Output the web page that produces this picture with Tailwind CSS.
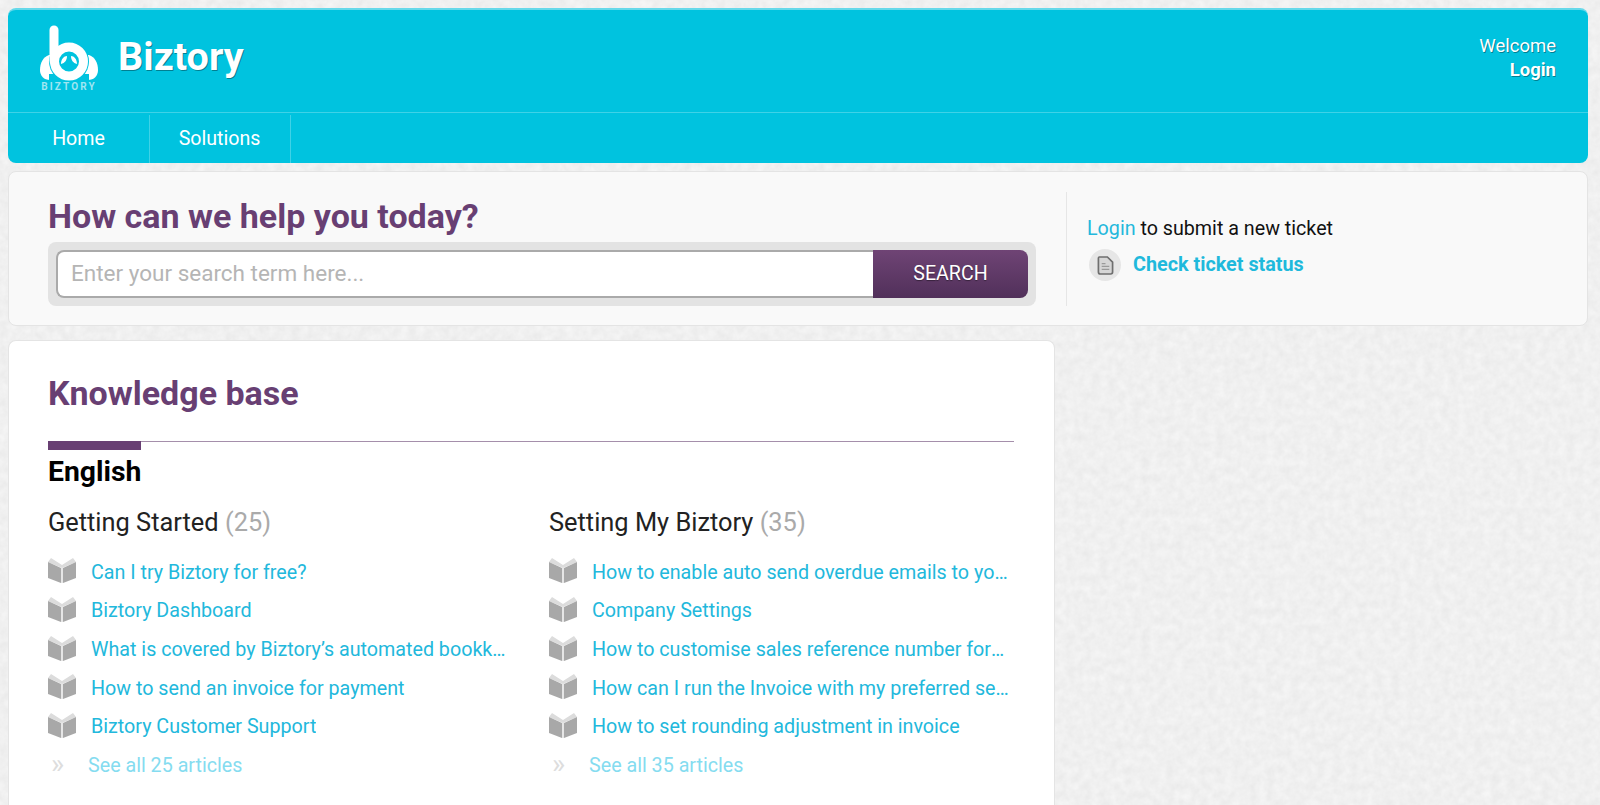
<!DOCTYPE html>
<html lang="en">
<head>
  <meta charset="UTF-8" />
  <meta name="viewport" content="width=device-width, initial-scale=1.0" />
  <title>Biztory Support</title>
  <script src="https://cdn.jsdelivr.net/npm/@tailwindcss/browser@4"></script>
</head>
<body class="bg-[#eeeeee] font-['Roboto',sans-serif] h-[805px] overflow-hidden pl-2 pr-[12px] pt-2 relative">
  <!-- paper texture behind the page -->
  <svg class="absolute inset-0 w-full h-full">
    <filter id="paper" color-interpolation-filters="sRGB">
      <feTurbulence type="fractalNoise" baseFrequency="0.12" numOctaves="3" seed="4" />
      <feColorMatrix type="matrix" values="0.06 0 0 0 0.91  0.06 0 0 0 0.91  0.06 0 0 0 0.91  0 0 0 0 1" />
    </filter>
    <rect width="100%" height="100%" filter="url(#paper)" />
  </svg>

  <svg class="hidden">
    <symbol id="book" viewBox="0 0 28 27">
      <path d="M3 1 L14 8 L25 1 L28 5 L14 11 L0 5 Z" fill="#dcdcdc" />
      <path d="M0 5 L13 11 V26 L0 21 Z" fill="#a8a8a8" />
      <path d="M28 5 L15 11 V26 L28 21 Z" fill="#a8a8a8" />
      <path d="M13 11 H15 V26 H13 Z" fill="#e6e6e6" />
    </symbol>
  </svg>

  <div class="relative">
    <!-- Header -->
    <header class="h-[155px] bg-[#00c3df] rounded-lg border-t-2 border-[#66d9ea] text-white">
      <div class="h-[103px] flex justify-between pl-8 pr-8 border-b border-[#3fd2e7]">
        <div class="flex items-center">
          <div class="w-[58px] flex flex-col items-center mt-[-6px]">
            <svg viewBox="0 0 58 56" class="w-[58px] h-[56px]">
              <path d="M9 30 C3 32 0 38 0 45 C0 51 4 55 10 55 H48 C54 55 58 51 58 45 C58 38 55 32 49 30 Z" fill="#fff" />
              <circle cx="29" cy="36.500" r="20" fill="#00c3df" />
              <rect x="9" y="49" width="40" height="7" fill="#00c3df" />
              <circle cx="29" cy="36.500" r="14.500" fill="none" stroke="#fff" stroke-width="9" />
              <path d="M14 5 V36" stroke="#fff" stroke-width="9" stroke-linecap="round" fill="none" />
              <path d="M21 39 C21 34 24 31 27 31 C27 35 25 38 21 39 Z M37 39 C37 34 34 31 31 31 C31 35 33 38 37 39 Z" fill="#fff" />
            </svg>
            <span class="text-[10px] leading-[10px] font-bold tracking-[2.100px] text-[#9fe6f2] mt-[1px] whitespace-nowrap">BIZTORY</span>
          </div>
          <span class="ml-[20px] text-[39.500px] leading-none font-bold mb-[8px] [text-shadow:1px_1px_0_rgba(0,0,0,0.35)]">Biztory</span>
        </div>
        <div class="text-right text-[18.500px] leading-[24px] pt-[24px] [text-shadow:1px_1px_0_rgba(0,0,0,0.35)]">
          <div>Welcome</div>
          <div class="font-bold">Login</div>
        </div>
      </div>
      <nav class="flex h-[50px] text-[19.600px] pt-[2px]">
        <a class="w-[142px] border-r border-[#3fd2e7] flex items-center justify-center">Home</a>
        <a class="w-[141px] border-r border-[#3fd2e7] flex items-center justify-center pr-[1px]">Solutions</a>
      </nav>
    </header>

    <!-- Search -->
    <section class="mt-2 h-[155px] bg-[#f9f9f9] border border-[#e4e4e4] rounded-lg flex items-start">
      <div class="w-[1057px] pl-[39px] pt-[24px]">
        <h1 class="text-[34px] leading-[40px] font-bold text-[#683f73]">How can we help you today?</h1>
        <div class="mt-[6px] w-[988px] h-[64px] bg-[#e3e3e3] rounded-lg p-2 flex">
          <div class="flex-1 bg-white border-2 border-[#aaaaaa] border-r-0 rounded-l-lg pl-[13px] flex items-center text-[22.500px] text-[#b5b5b5]">Enter your search term here...</div>
          <button class="w-[155px] rounded-r-lg bg-gradient-to-b from-[#6f4475] to-[#51305a] text-white text-[19.600px] [text-shadow:0_1px_1px_rgba(0,0,0,0.4)]">SEARCH</button>
        </div>
      </div>
      <div class="mt-[20px] h-[114px] border-l border-[#e6e6e6] pl-[20px] pt-[24px]">
        <p class="text-[19.700px] leading-[26px] text-[#111111]"><a class="text-[#24b8dc]">Login</a> to submit a new ticket</p>
        <div class="mt-[7px] flex items-center">
          <span class="ml-[2px] w-[32px] h-[32px] rounded-full bg-[#e6e6e6] flex items-center justify-center">
            <svg viewBox="0 0 18 20" class="w-[17px] h-[19px]">
              <path d="M2.500 1 H11 L16.500 6.500 V17 Q16.500 19 14.500 19 H3.500 Q1.500 19 1.500 17 V2.500 Q1.500 1 2.500 1 Z" fill="#d6d6d6" stroke="#6f6f6f" stroke-width="1.800" />
              <path d="M5 8 H9 M5 11 H13 M5 14 H13" stroke="#9a9a9a" stroke-width="1.300" />
            </svg>
          </span>
          <a class="ml-[12px] text-[19.800px] font-bold text-[#1fb9dc]">Check ticket status</a>
        </div>
      </div>
    </section>

    <!-- Knowledge base -->
    <main class="mt-[14px] w-[1047px] h-[480px] overflow-hidden bg-white border border-b-0 border-[#e4e4e4] rounded-t-lg pl-[39px] pr-[39px] pt-[32px]">
      <h2 class="text-[34px] leading-[40px] font-bold text-[#683f73]">Knowledge base</h2>
      <div class="mt-[28px] w-[966px] border-t border-[#a58fab] relative">
        <div class="absolute left-0 top-[-1px] w-[93px] h-[9px] bg-[#683f73]"></div>
      </div>
      <h3 class="mt-[13px] text-[28.300px] leading-[34px] font-bold text-black">English</h3>

      <div class="mt-[17px] grid grid-cols-[501px_465px]">
        <section>
          <h4 class="text-[25.400px] leading-[32px] text-[#222222]">Getting Started <span class="text-[#aaaaaa]">(25)</span></h4>
          <ul class="mt-[15px] text-[19.700px] text-[#22b8dc] w-[459px]">
            <li class="h-[38.700px] flex items-center"><svg class="w-[28px] h-[27px] shrink-0 mb-[3px]"><use href="#book" /></svg><span class="ml-[15px] truncate">Can I try Biztory for free?</span></li>
            <li class="h-[38.700px] flex items-center"><svg class="w-[28px] h-[27px] shrink-0 mb-[3px]"><use href="#book" /></svg><span class="ml-[15px] truncate">Biztory Dashboard</span></li>
            <li class="h-[38.700px] flex items-center"><svg class="w-[28px] h-[27px] shrink-0 mb-[3px]"><use href="#book" /></svg><span class="ml-[15px] truncate">What is covered by Biztory’s automated bookkeeping service?</span></li>
            <li class="h-[38.700px] flex items-center"><svg class="w-[28px] h-[27px] shrink-0 mb-[3px]"><use href="#book" /></svg><span class="ml-[15px] truncate">How to send an invoice for payment</span></li>
            <li class="h-[38.700px] flex items-center"><svg class="w-[28px] h-[27px] shrink-0 mb-[3px]"><use href="#book" /></svg><span class="ml-[15px] truncate">Biztory Customer Support</span></li>
            <li class="h-[38.700px] flex items-center text-[#85dcf0]"><span class="w-[40px] pl-[3px] text-[28px] leading-none text-[#dddddd] mb-[3px]">»</span>See all 25 articles</li>
          </ul>
        </section>
        <section>
          <h4 class="text-[25.400px] leading-[32px] text-[#222222]">Setting My Biztory <span class="text-[#aaaaaa]">(35)</span></h4>
          <ul class="mt-[15px] text-[19.700px] text-[#22b8dc] w-[461px]">
            <li class="h-[38.700px] flex items-center"><svg class="w-[28px] h-[27px] shrink-0 mb-[3px]"><use href="#book" /></svg><span class="ml-[15px] truncate">How to enable auto send overdue emails to your customers?</span></li>
            <li class="h-[38.700px] flex items-center"><svg class="w-[28px] h-[27px] shrink-0 mb-[3px]"><use href="#book" /></svg><span class="ml-[15px] truncate">Company Settings</span></li>
            <li class="h-[38.700px] flex items-center"><svg class="w-[28px] h-[27px] shrink-0 mb-[3px]"><use href="#book" /></svg><span class="ml-[15px] truncate">How to customise sales reference number format?</span></li>
            <li class="h-[38.700px] flex items-center"><svg class="w-[28px] h-[27px] shrink-0 mb-[3px]"><use href="#book" /></svg><span class="ml-[15px] truncate">How can I run the Invoice with my preferred sequence?</span></li>
            <li class="h-[38.700px] flex items-center"><svg class="w-[28px] h-[27px] shrink-0 mb-[3px]"><use href="#book" /></svg><span class="ml-[15px] truncate">How to set rounding adjustment in invoice</span></li>
            <li class="h-[38.700px] flex items-center text-[#85dcf0]"><span class="w-[40px] pl-[3px] text-[28px] leading-none text-[#dddddd] mb-[3px]">»</span>See all 35 articles</li>
          </ul>
        </section>
      </div>
    </main>
  </div>
</body>
</html>
